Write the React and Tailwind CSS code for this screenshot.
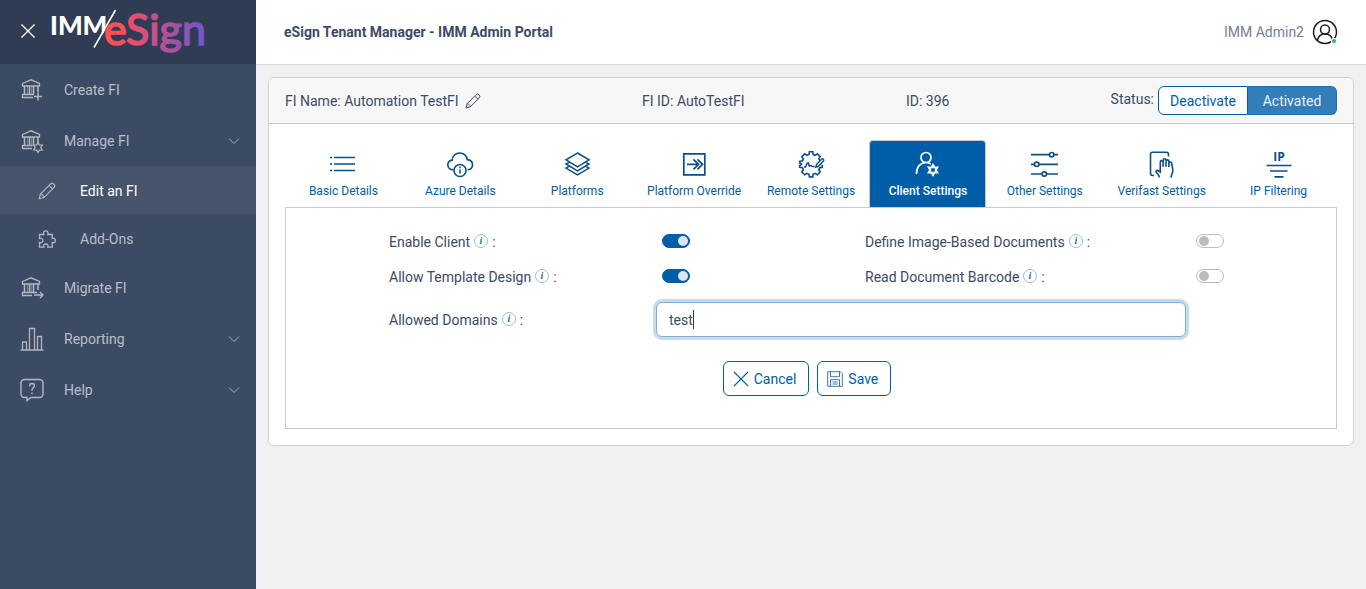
import React, { useState } from "react";

function Icon({ className = "", size = 24, children, ...rest }) {
  return (
    <svg
      width={size}
      height={size}
      viewBox={`0 0 ${size} ${size}`}
      fill="none"
      stroke="currentColor"
      strokeWidth="1"
      aria-hidden="true"
      className={"shrink-0 overflow-visible " + className}
      {...rest}
    >
      {children}
    </svg>
  );
}

const COG =
  "M-.9-5H.9L1.400-3.400 2.700-2.700 4.300-3.100 5.200-1.500 4-.4V.4L5.200 1.500 4.300 3.100 2.700 2.700 1.400 3.400.9 5H-.9L-1.400 3.400-2.700 2.700-4.300 3.100-5.200 1.500-4 .4V-.4L-5.200-1.500-4.300-3.100-2.700-2.700-1.400-3.400Z";

const STAR_COG =
  "M0-5 1.300-2.600 4.300-2.500 2.800 0 4.300 2.500 1.300 2.600 0 5-1.300 2.600-4.300 2.500-2.800 0-4.300-2.500-1.300-2.600Z";

function Bank({ children, base }) {
  return (
    <Icon strokeWidth="1.300">
      <path d="M2.500 5.500 11 1.800l8.500 3.700v2.500h-17Z" />
      <path d="M4.500 8v8M9.500 8v8M13.500 8v8M18 8v6" strokeWidth="1.600" />
      <path d="M7.500 8v8M11.500 8v8" strokeWidth="0.500" />
      <path d={base} />
      {children}
    </Icon>
  );
}

const BankPlus = () => (
  <Bank base="M14 16.500H2.500v3H13">
    <path d="M18 14.500v8M14 18.500h8" strokeWidth="1.500" />
  </Bank>
);

const BankCog = () => (
  <Bank base="M12.500 16.500H2.500v3H12">
    <path d={STAR_COG} transform="translate(18 18.500)" fill="#3c4b64" strokeWidth="1.300" />
  </Bank>
);

const BankArrow = () => (
  <Bank base="M17 16.500H2.500v3H12">
    <path d="M14 19h8.500M20 16l3 3-3 3" strokeWidth="1.400" />
  </Bank>
);

const Bars = () => (
  <Icon strokeWidth="1.300">
    <path d="M.5 23h23M2.500 23v-8h4v8M9.500 23V1.500h5V23M17.500 23V9.500h4V23" />
  </Icon>
);

const HelpBubble = () => (
  <Icon strokeWidth="1.400">
    <path d="M4.500 1.500h15a3.500 3.500 0 0 1 3.500 3.500v11a3.500 3.500 0 0 1-3.500 3.500H11l-4 3v-3H4.500A3.500 3.500 0 0 1 1 16V5a3.500 3.500 0 0 1 3.500-3.500Z" />
    <path d="M9.600 8.200c0-1.800 1-2.700 2.400-2.700s2.400.9 2.400 2.300c0 1.900-2.400 2.100-2.400 4.400v.6M12 14.500v1.500" />
  </Icon>
);

const Pencil = ({ className }) => (
  <Icon size={18} className={className} strokeWidth="1.100">
    <path d="M1.200 16.800 2.400 12 12.300 2.100a2.500 2.500 0 0 1 3.600 3.600L6 15.600ZM11 3.400 14.600 7M2.400 12c1.900.2 3.300 1.600 3.600 3.600" />
  </Icon>
);

const Puzzle = () => (
  <Icon size={18} strokeWidth="1.300">
    <path d="M1.500 4.500h4.300c-.8-1.900.2-3.700 2-3.700s2.800 1.800 2 3.700h4.400v4c1.700-.8 3.300.3 3.300 2s-1.600 2.700-3.300 2v4.600H9.900c.7-1.800-.4-3.100-2.100-3.100s-2.700 1.400-2 3.100H1.500v-4.600c1.800.7 3.400-.3 3.400-2s-1.600-2.800-3.400-2Z" />
  </Icon>
);

const Chevron = () => (
  <Icon size={12} className="ml-auto text-[#a3abb8]" strokeWidth="1">
    <path d="m1 3.500 5 5 5-5" />
  </Icon>
);

function Logo() {
  return (
    <svg width="160" height="56" viewBox="-1 -1 160 56" role="img" aria-label="IMM/eSign">
      <defs>
        <linearGradient id="brand" x1="54" y1="0" x2="156" y2="0" gradientUnits="userSpaceOnUse">
          <stop offset="0" stopColor="#ff4e57" />
          <stop offset="0.150" stopColor="#fb4f59" />
          <stop offset="0.450" stopColor="#cc4f86" />
          <stop offset="0.750" stopColor="#9254b0" />
          <stop offset="1" stopColor="#6f55d2" />
        </linearGradient>
      </defs>
      <text x="-1" y="31" fill="#fff" fontFamily="Lato, sans-serif" fontWeight="900" fontSize="26">
        IMM
      </text>
      <path d="M66 5 44 44H62V5Z" fill="#303c54" />
      <path d="M64.500 6 43 43.500" stroke="#fff" strokeWidth="1.600" />
      <text
        x="53"
        y="41"
        fill="url(#brand)"
        stroke="url(#brand)"
        strokeWidth="1.600"
        strokeLinejoin="round"
        fontFamily="Lato, sans-serif"
        fontWeight="400"
        fontSize="43"
      >
        eSign
      </text>
    </svg>
  );
}

function NavItem({ icon, label, sub, active, expandable }) {
  return (
    <li>
      <a
        href="#"
        className={
          "flex items-center pr-4 " +
          (sub ? "h-12 gap-6 pt-0.5 pl-[38px] " : "h-[51px] gap-5 pl-5 ") +
          (active ? "bg-[#46546c] text-white" : "text-[#b9bec8]")
        }
      >
        <span className="flex text-[#b1b7c1]">{icon}</span>
        <span>{label}</span>
        {expandable && <Chevron />}
      </a>
    </li>
  );
}

function Sidebar() {
  return (
    <aside className="min-h-screen w-64 shrink-0 bg-[#3c4b64]">
      <div className="flex h-16 items-center gap-[14px] bg-[#303c54] pb-0.5 pl-5">
        <button type="button" aria-label="Close menu" className="text-white">
          <Icon size={16} strokeWidth="1.400">
            <path d="m1.500 1.500 13 13M14.500 1.500l-13 13" />
          </Icon>
        </button>
        <Logo />
      </div>
      <nav aria-label="Main">
        <ul>
          <NavItem icon={<BankPlus />} label="Create FI" />
          <NavItem icon={<BankCog />} label="Manage FI" expandable />
          <NavItem icon={<Pencil />} label="Edit an FI" sub active />
          <NavItem icon={<Puzzle />} label="Add-Ons" sub />
          <NavItem icon={<BankArrow />} label="Migrate FI" />
          <NavItem icon={<Bars />} label="Reporting" expandable />
          <NavItem icon={<HelpBubble />} label="Help" expandable />
        </ul>
      </nav>
    </aside>
  );
}

function TabIcon({ children, strokeWidth = "1.600" }) {
  return (
    <Icon size={28} strokeWidth={strokeWidth} className="block">
      {children}
    </Icon>
  );
}

const TABS = [
  {
    label: "Basic Details",
    icon: (
      <TabIcon strokeWidth="1.500">
        <path d="M5 7.500h21M5 14h21M5 20.500h21M1 7.500h2.200M1 14h2.200M1 20.500h2.200" />
      </TabIcon>
    ),
  },
  {
    label: "Azure Details",
    icon: (
      <TabIcon>
        <path d="M7.500 19.800C4.300 20 1.800 17.900 1.800 15c0-2.700 1.900-4.600 4.500-4.900C6.400 6 9.600 3 13.800 3c4 0 7.100 2.800 7.400 6.600 3.100.3 5.300 2.300 5.300 5.200 0 2.700-1.900 4.900-5 5" />
        <circle cx="14" cy="20.500" r="6" fill="#fff" />
        <path d="M14 19.500v4M14 16.800v1.500" />
      </TabIcon>
    ),
  },
  {
    label: "Platforms",
    icon: (
      <TabIcon strokeWidth="1.500">
        <path d="m14.500 3 11.500 6.800-11.500 7L3 9.800ZM6.500 12.100 3 14l11.500 6.800L26 14l-3.500-1.900M6.500 16.200 3 18.100l11.500 6.800L26 18.100l-3.500-1.900" />
      </TabIcon>
    ),
  },
  {
    label: "Platform Override",
    icon: (
      <TabIcon strokeWidth="1.700">
        <path d="M3.800 3.800h21v21h-21ZM7 14.300h11M13.500 9.300l5 5-5 5M17.500 9.300l5 5-5 5" />
      </TabIcon>
    ),
  },
  {
    label: "Remote Settings",
    icon: (
      <TabIcon>
        <path d="M25 10.500h-2.300l-.9-2 1.400-1.900-2.900-2.800-2.200 1.500-2-.9-.3-2.700h-3.400l-.4 2.700-2.100.9-2.200-1.500-2.900 2.800 1.500 2.200-.8 2-2.800.5v1.700l1.800 1.300-1.800 1.300v1.700l2.800.5.8 2-1.500 2.200 2.900 2.800 2.200-1.500 2.100.9.4 2.700h3.400l.3-2.700 2-.9 2.200 1.500 2.900-2.800-1.400-2.200.9-2 2.500-.5v-2.500" />
        <path d="M7 17h1.500c.9-1.600 1.300-4.200 2.500-4.200 1 0 .5 3.400 1.400 3.400.8 0 .9-.8 1.600-.8s.6 1.100 1.500 1.100h2.200" strokeWidth="1.500" />
        <path d="m18.800 17.200.8-2.900 5-5a1.200 1.200 0 0 1 1.800 1.800L21.500 16.300Z" fill="#fff" strokeWidth="1.400" />
      </TabIcon>
    ),
  },
  {
    label: "Client Settings",
    active: true,
    icon: (
      <TabIcon strokeWidth="1.700">
        <circle cx="12" cy="7.500" r="5" />
        <path d="M2.500 23.500c0-6.500 4-11 9.500-11 1.600 0 3 .4 4.200 1.200" strokeLinecap="round" />
        <path d={STAR_COG} transform="translate(19 20)" strokeWidth="2" />
      </TabIcon>
    ),
  },
  {
    label: "Other Settings",
    icon: (
      <TabIcon strokeWidth="1.700">
        <path d="M0 4.700h18.500M23 4.700h4M0 14.300h3.500M8 14.300h19M0 24h11M15.500 24h11.500" />
        <circle cx="20.700" cy="4.700" r="2.200" />
        <circle cx="5.700" cy="14.300" r="2.200" />
        <circle cx="13.300" cy="24" r="2.200" />
      </TabIcon>
    ),
  },
  {
    label: "Verifast Settings",
    icon: (
      <TabIcon strokeWidth="1.600">
        <path d="M6 25.500H4.700c-1.200 0-2.200-1-2.200-2.200V4.500c0-1.200 1-2.200 2.200-2.200h13.600c1.200 0 2.200 1 2.200 2.200v2" />
        <path d="M11.500 27.500c-.5-2.600-1.700-3.300-3.200-5.200-1-1.200.7-2.500 2-1.500l2 1.200V12c0-1.800 2.800-1.800 2.800 0v-1.800c0-1.900 2.900-1.900 2.900 0v1c0-1.800 2.900-1.800 2.900 0v2.100c0-1.700 2.700-1.700 2.800 0 .4 3.300 1.500 5.900 1 8.700-.4 1.500-1.600 3-1.600 5.500" />
        <path d="M15.100 12v4.700M18 11.200v5.500M20.900 13v4" />
      </TabIcon>
    ),
  },
  {
    label: "IP Filtering",
    icon: (
      <TabIcon strokeWidth="1.700">
        <text x="14" y="11" textAnchor="middle" fontFamily="Open Sans, sans-serif" fontWeight="700" fontSize="12" fill="currentColor" stroke="none">
          IP
        </text>
        <path d="M1.500 15.500h25M5 21h17.500M9.500 26.800h9" />
      </TabIcon>
    ),
  },
];

function Tabs() {
  return (
    <div role="tablist" aria-label="FI settings" className="flex">
      {TABS.map((t) => (
        <button
          key={t.label}
          type="button"
          role="tab"
          aria-selected={!!t.active}
          className={
            "flex h-[67px] flex-1 flex-col items-center gap-[5px] rounded-t border border-b-0 pt-[9px] text-xs leading-4 whitespace-nowrap " +
            (t.active
              ? "border-[#c4c9d0] bg-[#005da8] font-medium text-white"
              : "border-transparent text-[#005da8]")
          }
        >
          <span className={t.active ? "text-white" : "text-[#0a4f88]"}>{t.icon}</span>
          <span>{t.label}</span>
        </button>
      ))}
    </div>
  );
}

function InfoIcon() {
  return (
    <svg width="14" height="14" viewBox="0 0 14 14" aria-hidden="true" className="mb-0.5 shrink-0">
      <circle cx="7" cy="7" r="6.500" fill="#fff" stroke="#9fbccb" />
      <text x="7" y="10" textAnchor="middle" fontFamily="Liberation Serif, serif" fontStyle="italic" fontWeight="700" fontSize="10" fill="#1f6f9f">
        i
      </text>
    </svg>
  );
}

function FieldLabel({ htmlFor, children }) {
  return (
    <label htmlFor={htmlFor} className="flex items-center gap-1 whitespace-nowrap">
      {children}
      <InfoIcon />
      <span>:</span>
    </label>
  );
}

function Toggle({ id, defaultChecked }) {
  return (
    <div className="flex items-center pb-0.5 pl-1.5">
      <input
        id={id}
        type="checkbox"
        role="switch"
        defaultChecked={defaultChecked}
        className="h-[14px] w-7 cursor-pointer appearance-none rounded-full border border-[#bbbbc0] bg-white before:mt-px before:ml-[2px] before:block before:size-[10px] before:rounded-full before:bg-[#bbbbc0] checked:border-[#005da8] checked:bg-[#005da8] checked:before:ml-[15px] checked:before:bg-[#dbe6f1]"
      />
    </div>
  );
}

function ClientSettingsForm() {
  const [domains, setDomains] = useState("test");
  const button =
    "flex h-[35px] items-center gap-[5px] rounded-md border border-[#005da8] bg-white pr-3 pl-[9px] text-[#005da8]";
  return (
    <form
      onSubmit={(e) => e.preventDefault()}
      className="border border-[#c8ccd0] pt-4 pb-8"
    >
      <div className="grid grid-cols-[103fr_267fr_209fr_325fr_146fr]">
        <div className="col-start-2 flex h-[35px] items-center">
          <FieldLabel htmlFor="enable-client">Enable Client</FieldLabel>
        </div>
        <Toggle id="enable-client" defaultChecked />
        <FieldLabel htmlFor="image-docs">Define Image-Based Documents</FieldLabel>
        <Toggle id="image-docs" />
        <div className="col-start-2 flex h-[35px] items-center">
          <FieldLabel htmlFor="template-design">Allow Template Design</FieldLabel>
        </div>
        <Toggle id="template-design" defaultChecked />
        <FieldLabel htmlFor="barcode">Read Document Barcode</FieldLabel>
        <Toggle id="barcode" />
        <div className="col-start-2 mt-2 flex h-[35px] items-center">
          <FieldLabel htmlFor="domains">Allowed Domains</FieldLabel>
        </div>
        <div className="relative col-span-2 mt-2 mr-1">
          <input
            id="domains"
            type="text"
            value={domains}
            onChange={(e) => setDomains(e.target.value)}
            className="peer h-[35px] w-full rounded-md border border-[#7faed4] bg-white px-3 ring-3 ring-[#c6dbeb] outline-none"
          />
          <span
            aria-hidden="true"
            className="pointer-events-none absolute top-2 left-[37px] h-[19px] w-px bg-[#303c54] peer-focus:hidden"
          />
        </div>
      </div>
      <div className="mt-6 flex justify-center gap-2 pr-2">
        <button type="button" className={button}>
          <Icon size={16} strokeWidth="1.100">
            <path d="m1 1 14 14M15 1 1 15" />
          </Icon>
          Cancel
        </button>
        <button type="submit" className={button}>
          <Icon size={16} strokeWidth="0.900" className="text-[#2b6a9f]">
            <path d="M.7.7h12.600l2 2v12.600H.7ZM3.500.7v5h9v-5M3.500 15.300V8.700h9v6.600M5.500 11h5M5.500 13h5" />
          </Icon>
          Save
        </button>
      </div>
    </form>
  );
}

export default function App() {
  return (
    <div className="flex min-h-screen bg-[#f0f0f0] font-['Roboto',sans-serif] text-sm text-[#3c4b64]">
      <Sidebar />
      <div className="min-w-0 flex-1">
        <header className="flex h-[65px] items-center justify-between border-b border-[#d8dbe0] bg-white pr-7 pl-7">
          <h1 className="font-bold">eSign Tenant Manager - IMM Admin Portal</h1>
          <button type="button" className="flex items-center gap-2 text-[#768192]">
            IMM Admin2
            <Icon size={26} strokeWidth="1.500" className="text-[#1b1b1b]">
              <circle cx="13" cy="13" r="11.500" />
              <circle cx="13" cy="10.500" r="4.500" />
              <path d="M5.500 21.500c.5-4 3-6.500 7.500-6.500s7 2.500 7.500 6.500" />
              <circle cx="22" cy="22" r="3" fill="#fff" stroke="none" />
              <circle cx="22" cy="22" r="2" fill="#2eb85c" stroke="none" />
            </Icon>
          </button>
        </header>
        <main className="p-3">
          <section className="rounded-md border border-[#d0d3d6] bg-white">
            <div className="flex h-[46px] items-center rounded-t-md border-b border-[#c8ccd0] bg-[#f7f7f7] px-4">
              <div className="flex flex-[357] items-center gap-1.5">
                <span>FI Name: Automation TestFI</span>
                <button type="button" aria-label="Edit FI name">
                  <Pencil className="size-4" />
                </button>
              </div>
              <div className="flex-[264]">FI ID: AutoTestFI</div>
              <div className="flex-[203]">ID: 396</div>
              <div className="flex flex-[228] items-center justify-end gap-1">
                <span className="pb-1">Status:</span>
                <div className="flex">
                  <button
                    type="button"
                    className="h-[29px] w-[90px] rounded-l-md border border-[#005da8] bg-white text-[#005da8]"
                  >
                    Deactivate
                  </button>
                  <button
                    type="button"
                    className="h-[29px] w-[89px] rounded-r-md border border-l-0 border-[#1f6fb2] bg-[#337db9] text-[#e8f0f7]"
                  >
                    Activated
                  </button>
                </div>
              </div>
            </div>
            <div className="p-4">
              <Tabs />
              <ClientSettingsForm />
            </div>
          </section>
        </main>
      </div>
    </div>
  );
}
